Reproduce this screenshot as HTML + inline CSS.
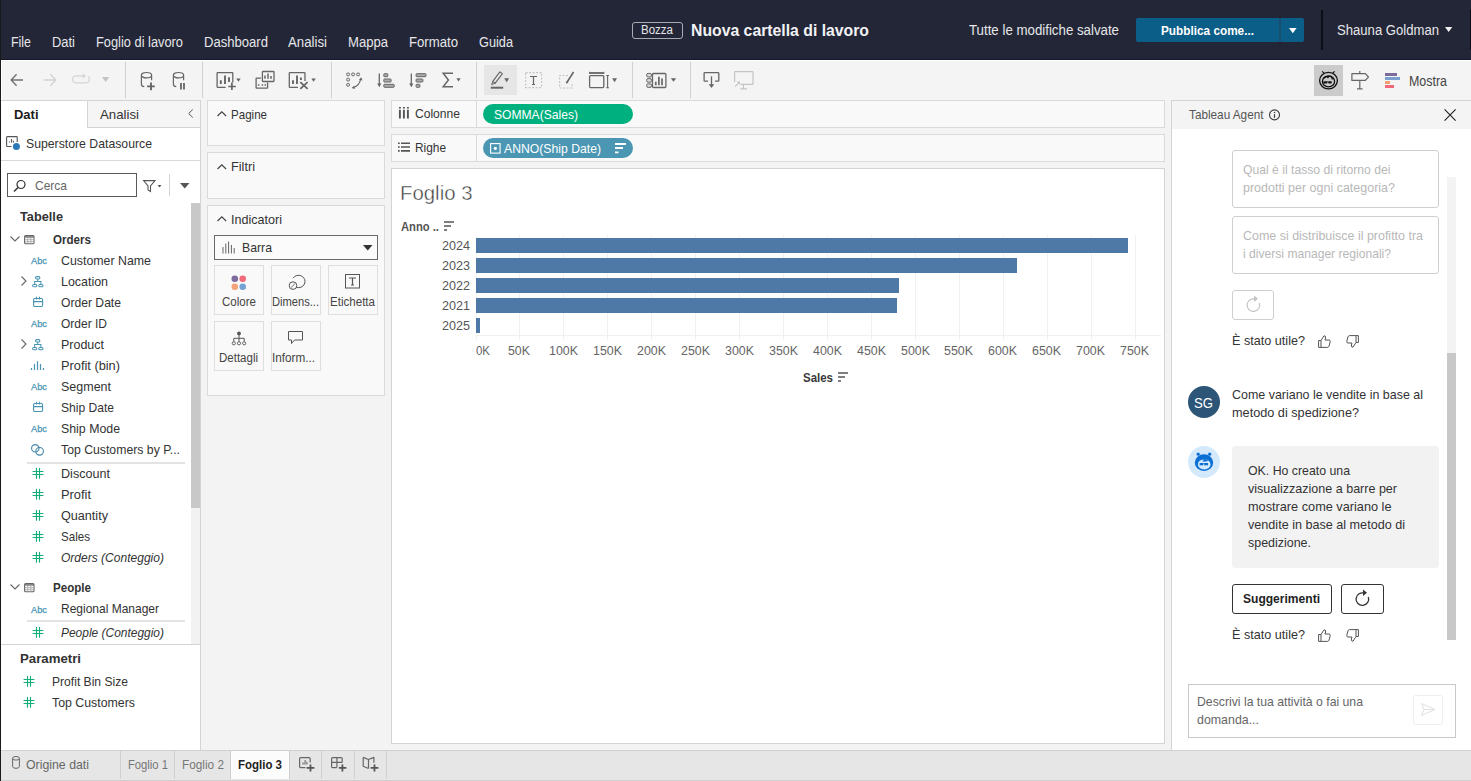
<!DOCTYPE html>
<html><head><meta charset="utf-8">
<style>
*{box-sizing:border-box;margin:0;padding:0}
html,body{width:1471px;height:781px;overflow:hidden;background:#f3f3f3;font-family:"Liberation Sans",sans-serif;color:#333}
.a{position:absolute}
.t{position:absolute;white-space:nowrap;line-height:1}
svg{position:absolute;overflow:visible}
</style></head><body>
<div class="a" style="left:0px;top:0px;width:1471px;height:59px;background:#232637;"></div>
<div class="a" style="left:0px;top:59px;width:1471px;height:1px;background:#161929;"></div>
<div class="a" style="left:0px;top:60px;width:1471px;height:1px;background:#ffffff;"></div>
<div class="a" style="left:0px;top:0px;width:1px;height:781px;background:#1a1a1a;"></div>
<div class="t" style="left: 11px; top: 35.15px; font-size: 14px; color: rgb(230, 230, 233); transform: scaleX(0.8864); transform-origin: 0px 0px;">File</div>
<div class="t" style="left: 52px; top: 35.15px; font-size: 14px; color: rgb(230, 230, 233); transform: scaleX(0.9235); transform-origin: 0px 0px;">Dati</div>
<div class="t" style="left: 96px; top: 35.15px; font-size: 14px; color: rgb(230, 230, 233); transform: scaleX(0.9164); transform-origin: 0px 0px;">Foglio di lavoro</div>
<div class="t" style="left: 204px; top: 35.15px; font-size: 14px; color: rgb(230, 230, 233); transform: scaleX(0.9343); transform-origin: 0px 0px;">Dashboard</div>
<div class="t" style="left: 288px; top: 35.15px; font-size: 14px; color: rgb(230, 230, 233); transform: scaleX(0.9455); transform-origin: 0px 0px;">Analisi</div>
<div class="t" style="left: 348px; top: 35.15px; font-size: 14px; color: rgb(230, 230, 233); transform: scaleX(0.9343); transform-origin: 0px 0px;">Mappa</div>
<div class="t" style="left: 409px; top: 35.15px; font-size: 14px; color: rgb(230, 230, 233); transform: scaleX(0.94); transform-origin: 0px 0px;">Formato</div>
<div class="t" style="left: 479px; top: 35.15px; font-size: 14px; color: rgb(230, 230, 233); transform: scaleX(0.9101); transform-origin: 0px 0px;">Guida</div>
<div class="a" style="left:632px;top:22px;width:51px;height:17px;border:1px solid #a9abb4;border-radius:3px;"></div>
<div class="t" style="left: 641px; top: 24.42px; font-size: 12.5px; color: rgb(230, 230, 233); transform: scaleX(0.9209); transform-origin: 0px 0px;">Bozza</div>
<div class="t" style="left: 691px; top: 21.61px; font-size: 17px; color: rgb(242, 242, 244); font-weight: bold; transform: scaleX(0.9281); transform-origin: 0px 0px;">Nuova cartella di lavoro</div>
<div class="t" style="left: 969px; top: 23.15px; font-size: 14px; color: rgb(230, 230, 233); transform: scaleX(0.948); transform-origin: 0px 0px;">Tutte le modifiche salvate</div>
<div class="a" style="left:1136px;top:18px;width:168px;height:24px;background:#0b5e88;border-radius:2px;"></div>
<div class="a" style="left:1279px;top:18px;width:2px;height:24px;background:#174f6f;"></div>
<div class="t" style="left: 1161px; top: 23.99px; font-size: 13px; color: rgb(255, 255, 255); font-weight: bold; transform: scaleX(0.9065); transform-origin: 0px 0px;">Pubblica come...</div>
<svg style="left:1288.5px;top:27.8px;" width="8" height="6" viewBox="0 0 8 6"><path d="M0 0H7.6L3.8 5.2Z" fill="#fff"></path></svg>
<div class="a" style="left:1321px;top:10px;width:2px;height:40px;background:#0d0e15;"></div>
<div class="a" style="left:1470px;top:10px;width:1px;height:40px;background:#0d0e15;"></div>
<div class="t" style="left: 1337px; top: 23.15px; font-size: 14px; color: rgb(230, 230, 233); transform: scaleX(0.936); transform-origin: 0px 0px;">Shauna Goldman</div>
<svg style="left:1444.8px;top:26.9px;" width="8" height="6" viewBox="0 0 8 6"><path d="M0 0H7.3L3.65 5Z" fill="#f0f0f2"></path></svg>
<div class="a" style="left:0px;top:61px;width:1471px;height:40px;background:#f4f4f4;"></div>
<div class="a" style="left:1px;top:61px;width:1px;height:39px;background:#fff;"></div>
<div class="a" style="left:0px;top:59px;width:1px;height:42px;background:#1a1a1a;"></div>
<div class="a" style="left:125px;top:62px;width:1px;height:36px;background:#d0d0d0;"></div>
<div class="a" style="left:202px;top:62px;width:1px;height:36px;background:#d0d0d0;"></div>
<div class="a" style="left:331px;top:62px;width:1px;height:36px;background:#d0d0d0;"></div>
<div class="a" style="left:476px;top:62px;width:1px;height:36px;background:#d0d0d0;"></div>
<div class="a" style="left:632px;top:62px;width:1px;height:36px;background:#d0d0d0;"></div>
<div class="a" style="left:690px;top:62px;width:1px;height:36px;background:#d0d0d0;"></div>
<svg style="left:10px;top:73px;" width="14" height="14" viewBox="0 0 14 14"><path d="M13 7H1.5M6.6 1.2L1.2 7L6.6 12.8" stroke="#727272" stroke-width="1.4" fill="none"></path></svg>
<svg style="left:43px;top:73px;" width="14" height="14" viewBox="0 0 14 14"><path d="M0.5 7H12.5M7.4 1.2L12.8 7L7.4 12.8" stroke="#d2d2d2" stroke-width="1.3" fill="none"></path></svg>
<svg style="left:72px;top:73px;" width="19" height="12" viewBox="0 0 19 12"><path d="M11.5 2.8H4.3Q0.6 2.8 0.6 6.3Q0.6 9.8 4.3 9.8H13.8Q17.4 9.8 17.4 6.3Q17.4 4.6 16.2 3.4" stroke="#d4d4d4" stroke-width="1.2" fill="none"></path><path d="M10.8 0.6L14 3.1L10.8 5.6Z" fill="#d4d4d4"></path></svg>
<svg style="left:101.5px;top:77px;" width="8" height="6" viewBox="0 0 8 6"><path d="M0 0H7.3L3.65 5Z" fill="#c4c4c4"></path></svg>
<svg style="left:141px;top:72px;" width="16" height="19" viewBox="0 0 16 19"><ellipse cx="5.5" cy="3.2" rx="5.1" ry="2.7" stroke="#666" stroke-width="1.2" fill="none"></ellipse><path d="M0.4 3.2V12.3Q0.4 14.5 3.3 14.7" stroke="#666" stroke-width="1.2" fill="none"></path><path d="M10.6 3.2V8.2" stroke="#666" stroke-width="1.2"></path><path d="M10 10.6V18.2M6.1 14.4H13.8" stroke="#666" stroke-width="1.9"></path></svg>
<svg style="left:173px;top:72px;" width="16" height="19" viewBox="0 0 16 19"><ellipse cx="5.5" cy="3.2" rx="5.1" ry="2.7" stroke="#666" stroke-width="1.2" fill="none"></ellipse><path d="M0.4 3.2V12.3Q0.4 14.5 3.3 14.7" stroke="#666" stroke-width="1.2" fill="none"></path><path d="M10.6 3.2V8.2" stroke="#666" stroke-width="1.2"></path><path d="M8 10.9V17.5M11 10.9V17.5" stroke="#666" stroke-width="1.8"></path></svg>
<svg style="left:216px;top:72px;" width="26" height="19" viewBox="0 0 26 19"><path d="M9.7 15.3H1.7Q1.1 15.3 1.1 14.7V1.2Q1.1 0.6 1.7 0.6H16.2Q16.8 0.6 16.8 1.2V10.6" stroke="#666" stroke-width="1.3" fill="none"></path><path d="M4.8 8.3V12M9 3.5V12M13 5.3V10" stroke="#666" stroke-width="1.9"></path><path d="M15.9 10.6V18M12.3 14.5H19.8" stroke="#666" stroke-width="1.7"></path><path d="M20.2 6.5H24.7L22.45 9.8Z" fill="#666"></path></svg>
<svg style="left:255px;top:71px;" width="20" height="18" viewBox="0 0 20 18"><rect x="7.4" y="0.5" width="11.6" height="10" rx="0.7" stroke="#666" stroke-width="1.3" fill="none"></rect><path d="M10 4.5V7.8M13 2.5V7.8M16 5V7.8" stroke="#666" stroke-width="1.5"></path><path d="M6 7.1H1.7Q1.1 7.1 1.1 7.7V16.5Q1.1 17.1 1.7 17.1H12Q12.6 17.1 12.6 16.5V11.6" stroke="#666" stroke-width="1.3" fill="none"></path><path d="M3.6 13.3V14.7M7.4 13.3V14.7M10.3 13.3V14.7" stroke="#666" stroke-width="1.5"></path></svg>
<svg style="left:288px;top:72px;" width="28" height="19" viewBox="0 0 28 19"><path d="M10 15.3H1.9Q1.3 15.3 1.3 14.7V1.2Q1.3 0.6 1.9 0.6H16.4Q17 0.6 17 1.2V9" stroke="#666" stroke-width="1.3" fill="none"></path><path d="M5 8.3V12M9 3.5V12M12.9 5.5V8" stroke="#666" stroke-width="1.9"></path><path d="M12.3 10.1L19.6 16.9M19.6 10.1L12.3 16.9" stroke="#666" stroke-width="1.7"></path><path d="M23.3 6.5H27.8L25.55 9.8Z" fill="#666"></path></svg>
<svg style="left:346px;top:72px;" width="18" height="18" viewBox="0 0 18 18"><g stroke="#666" stroke-width="1" fill="#e8e8e8"><rect x="0.6" y="1" width="3" height="2.8" rx="1.3"></rect><rect x="5.6" y="1" width="3" height="2.8" rx="1.3"></rect><rect x="10.6" y="1" width="3" height="2.8" rx="1.3"></rect><rect x="0.6" y="6.2" width="3" height="2.8" rx="1.3"></rect><rect x="0.6" y="11.4" width="3" height="2.8" rx="1.3"></rect></g><path d="M14.5 7.5Q13.5 13.5 7.5 15.5" stroke="#666" stroke-width="1.2" fill="none"></path><path d="M13 7.8L15.2 5.2L16.6 8.4Z M8.2 13.8L5.6 15.9L8.9 17Z" fill="#666"></path></svg>
<svg style="left:377px;top:72px;" width="18" height="18" viewBox="0 0 18 18"><path d="M2.3 1.4V12.5" stroke="#666" stroke-width="1.3"></path><path d="M0.2 11.6H4.4L2.3 15.2Z" fill="#666"></path><g stroke="#666" stroke-width="1" fill="#aaaaaa"><rect x="6.8" y="1.7" width="4" height="3" rx="0.7"></rect><rect x="6.8" y="7" width="7.3" height="3" rx="0.7"></rect><rect x="6.8" y="12.3" width="10.4" height="3" rx="0.7"></rect></g></svg>
<svg style="left:409px;top:72px;" width="18" height="18" viewBox="0 0 18 18"><path d="M2.3 1.4V12.5" stroke="#666" stroke-width="1.3"></path><path d="M0.2 11.6H4.4L2.3 15.2Z" fill="#666"></path><g stroke="#666" stroke-width="1" fill="#aaaaaa"><rect x="7.1" y="1.7" width="9.9" height="3" rx="0.7"></rect><rect x="7.1" y="7" width="6.8" height="3" rx="0.7"></rect><rect x="7.1" y="12.3" width="3.8" height="3" rx="0.7"></rect></g></svg>
<svg style="left:442px;top:72px;" width="20" height="17" viewBox="0 0 20 17"><path d="M11 1.3H1.2L6.4 8L1.2 14.8H11" stroke="#666" stroke-width="1.5" fill="none"></path><path d="M14.3 6.3H18.7L16.5 9.4Z" fill="#666"></path></svg>
<div class="a" style="left:484px;top:65px;width:33px;height:30px;background:#e6e6e6;"></div>
<svg style="left:490px;top:71px;" width="24" height="19" viewBox="0 0 24 19"><path d="M2.8 10.4L9.9 0.9L12.4 2.6L5.3 12.2Z" stroke="#666" stroke-width="1.1" fill="none" stroke-linejoin="round"></path><path d="M2.8 10.4L1.6 13.6L5.3 12.2" stroke="#666" stroke-width="1" fill="none"></path><rect x="0.8" y="15.7" width="12.4" height="2" fill="#666"></rect><path d="M14.2 7.3H19.1L16.65 11.2Z" fill="#666"></path></svg>
<svg style="left:525px;top:72px;" width="18" height="17" viewBox="0 0 18 17"><rect x="0.6" y="0.6" width="16" height="15" stroke="#c4c4c4" stroke-width="1.1" stroke-dasharray="2 1.5" fill="none"></rect><path d="M5 4.5H12M8.5 4.5V12.5M7 12.5H10" stroke="#666" stroke-width="1.2" fill="none"></path></svg>
<svg style="left:559px;top:71px;" width="16" height="18" viewBox="0 0 16 18"><path d="M9 4.5H0.6V17H13V12" stroke="#c4c4c4" stroke-width="1.1" stroke-dasharray="2 1.5" fill="none"></path><path d="M14.5 1L8.5 10.5" stroke="#666" stroke-width="1.6"></path><path d="M7 11.5L9 11" stroke="#666" stroke-width="2"></path></svg>
<svg style="left:589px;top:71px;" width="29" height="19" viewBox="0 0 29 19"><path d="M0.6 2H14.8" stroke="#666" stroke-width="1.8"></path><path d="M0.6 0.8V3M14.8 0.8V3" stroke="#666" stroke-width="1"></path><rect x="0.6" y="4.6" width="14.2" height="12" rx="1" stroke="#666" stroke-width="1.3" fill="none"></rect><path d="M18.6 4.5V16.7M17.2 4.5H20M17.2 16.7H20" stroke="#666" stroke-width="1.1"></path><path d="M23.2 7.3H28L25.6 11.2Z" fill="#666"></path></svg>
<svg style="left:645px;top:72px;" width="32" height="17" viewBox="0 0 32 17"><g stroke="#666" stroke-width="1" fill="#d8d8d8"><rect x="1.6" y="1.4" width="5" height="3.6" rx="1.6"></rect><rect x="1.6" y="6.6" width="5" height="3.6" rx="1.6"></rect><rect x="1.6" y="11.8" width="5" height="3.6" rx="1.6"></rect></g><rect x="7.5" y="1.5" width="13.4" height="14" rx="1" stroke="#666" stroke-width="1.3" fill="none"></rect><path d="M10.8 13.2V9.7M13.9 13.2V4.8M17 13.2V6.6" stroke="#666" stroke-width="1.7"></path><path d="M25.8 6.2H31.2L28.5 9.7Z" fill="#666"></path></svg>
<svg style="left:703px;top:72px;" width="18" height="17" viewBox="0 0 18 17"><path d="M5 9.2H1.9Q1.1 9.2 1.1 8.4V1.4Q1.1 0.6 1.9 0.6H15Q15.8 0.6 15.8 1.4V8.4Q15.8 9.2 15 9.2H12" stroke="#666" stroke-width="1.3" fill="none"></path><path d="M8.5 4.3V13" stroke="#666" stroke-width="1.3"></path><path d="M5.7 12.2H11.3L8.5 16Z" fill="#666"></path></svg>
<svg style="left:734px;top:71px;" width="20" height="19" viewBox="0 0 20 19"><path d="M0.6 11V1.2Q0.6 0.6 1.2 0.6H18.4Q19 0.6 19 1.2V12.8Q19 13.4 18.4 13.4H6.5" stroke="#c4c4c4" stroke-width="1.2" fill="none"></path><path d="M9.4 13.4V17.8M6.3 17.8H13" stroke="#c4c4c4" stroke-width="1.2"></path><path d="M1 15.6L5.2 11.4" stroke="#c4c4c4" stroke-width="1.2"></path><path d="M2.8 10.6H6V13.8Z" fill="#c4c4c4"></path></svg>
<div class="a" style="left:1314px;top:65px;width:29px;height:31px;background:#cbcbcb;"></div>
<svg style="left:1319px;top:71px;" width="20" height="19" viewBox="0 0 20 19"><ellipse cx="9.5" cy="9.6" rx="8.9" ry="8.3" stroke="#111" stroke-width="1.3" fill="none"></ellipse><path d="M3.2 0.3L5 2.2M15.6 0.3L13.8 2.2" stroke="#111" stroke-width="1.2"></path><ellipse cx="9.5" cy="10.4" rx="6.1" ry="5.4" stroke="#111" stroke-width="1.3" fill="none"></ellipse><path d="M4.5 7.5Q7 4.5 9 6.5Q10 4.5 12 5.5Q13 6.5 13.5 8.5" stroke="#111" stroke-width="1.3" fill="none"></path><rect x="4.3" y="10.2" width="4" height="2.3" rx="0.8" fill="#111"></rect><rect x="9.2" y="10.2" width="3.6" height="2.3" rx="0.8" fill="#111"></rect><path d="M8 10.8H9.5" stroke="#111" stroke-width="0.8"></path></svg>
<svg style="left:1351px;top:71px;" width="19" height="19" viewBox="0 0 19 19"><path d="M8.8 0V2.2M8.8 9.5V17.6M6 17.8H11.6" stroke="#666" stroke-width="1.2"></path><path d="M0.9 2.6H14.4L17.4 6L14.4 9.4H0.9Z" stroke="#666" stroke-width="1.2" fill="none" stroke-linejoin="round"></path></svg>
<div class="a" style="left:1385px;top:73px;width:11.5px;height:2.8px;background:#7b6c9c;"></div>
<div class="a" style="left:1385px;top:77.3px;width:14.7px;height:2.5px;background:#7ba0cf;"></div>
<div class="a" style="left:1385px;top:81.2px;width:5.3px;height:2.5px;background:#f0a070;"></div>
<div class="a" style="left:1385px;top:85.1px;width:8.5px;height:2.8px;background:#f0687a;"></div>
<div class="t" style="left: 1409px; top: 74.15px; font-size: 14px; color: rgb(68, 68, 68); transform: scaleX(0.8879); transform-origin: 0px 0px;">Mostra</div>
<div class="a" style="left:1px;top:100px;width:200px;height:650px;background:#fff;border:1px solid #d4d4d4;border-left:none;border-bottom:none;"></div>
<div class="a" style="left:87px;top:101px;width:113px;height:26px;background:#f5f5f5;"></div>
<div class="a" style="left:87px;top:101px;width:1px;height:27px;background:#d4d4d4;"></div>
<div class="a" style="left:87px;top:127px;width:113px;height:1px;background:#d4d4d4;"></div>
<div class="t" style="left: 13.5px; top: 107.57px; font-size: 13.5px; color: rgb(26, 26, 26); font-weight: bold; transform: scaleX(0.9602); transform-origin: 0px 0px;">Dati</div>
<div class="t" style="left: 100px; top: 107.57px; font-size: 13.5px; color: rgb(51, 51, 51); transform: scaleX(0.9804); transform-origin: 0px 0px;">Analisi</div>
<svg style="left:187.5px;top:108.5px;" width="6" height="10" viewBox="0 0 6 10"><path d="M4.8 0.5L0.7 4.5L4.8 8.5" stroke="#555" stroke-width="1" fill="none"></path></svg>
<svg style="left:6px;top:136px;" width="15" height="15" viewBox="0 0 15 15"><path d="M5.5 10.5H1.3Q0.6 10.5 0.6 9.8V1.3Q0.6 0.6 1.3 0.6H10.5Q11.2 0.6 11.2 1.3V5.9" stroke="#555" stroke-width="1.1" fill="none"></path><path d="M3.4 5.6V6.6M5.5 3.1V6.6M7.4 4.8V6.6" stroke="#555" stroke-width="1.1"></path><circle cx="10.4" cy="10.4" r="3.5" fill="#2c79b8"></circle></svg>
<div class="t" style="left: 26px; top: 136.99px; font-size: 13px; color: rgb(51, 51, 51); transform: scaleX(0.9425); transform-origin: 0px 0px;">Superstore Datasource</div>
<div class="a" style="left:1px;top:160px;width:199px;height:1px;background:#d9d9d9;"></div>
<div class="a" style="left:7px;top:173px;width:130px;height:24px;background:#fff;border:1px solid #5a5a5a;"></div>
<svg style="left:13px;top:180px;" width="13" height="12" viewBox="0 0 13 12"><circle cx="8" cy="4.5" r="4" stroke="#333" stroke-width="1.2" fill="none"></circle><path d="M5 7.5L1 11.5" stroke="#333" stroke-width="1.4"></path></svg>
<div class="t" style="left: 35px; top: 178.57px; font-size: 13.5px; color: rgb(102, 102, 102); transform: scaleX(0.8885); transform-origin: 0px 0px;">Cerca</div>
<svg style="left:143px;top:180px;" width="19" height="12" viewBox="0 0 19 12"><path d="M0.6 0.6H12L7.5 6V11.5L5 10V6Z" stroke="#555" stroke-width="1.1" fill="none"></path><path d="M14.5 5H18.5L16.5 7.5Z" fill="#555"></path></svg>
<div class="a" style="left:169px;top:174px;width:1px;height:22px;background:#d4d4d4;"></div>
<svg style="left:180px;top:183px;" width="10" height="6" viewBox="0 0 10 6"><path d="M0 0H9.5L4.75 5.5Z" fill="#555"></path></svg>
<div class="a" style="left:191px;top:203px;width:9px;height:441px;background:#f2f2f2;"></div>
<div class="a" style="left:191px;top:203px;width:9px;height:305px;background:#c8c8c8;"></div>
<div class="t" style="left: 19.5px; top: 209.57px; font-size: 13.5px; color: rgb(51, 51, 51); font-weight: bold; transform: scaleX(0.9444); transform-origin: 0px 0px;">Tabelle</div>
<svg style="left:10px;top:236px;" width="10" height="6" viewBox="0 0 10 6"><path d="M0.5 0.5L5 5L9.5 0.5" stroke="#666" stroke-width="1.1" fill="none"></path></svg>
<svg style="left:24px;top:235px;" width="11" height="10" viewBox="0 0 11 10"><rect x="0.6" y="0.6" width="9.4" height="8.2" rx="1" stroke="#666" stroke-width="1.1" fill="none"></rect><path d="M0.6 2.6H10M1 4.7H9.6M1 6.7H9.6M3.8 2.6V8.6M6.8 2.6V8.6" stroke="#999" stroke-width="0.7"></path><path d="M0.6 1.8H10" stroke="#666" stroke-width="1"></path></svg>
<div class="t" style="left: 52.5px; top: 232.99px; font-size: 13px; color: rgb(51, 51, 51); font-weight: bold; transform: scaleX(0.8912); transform-origin: 0px 0px;">Orders</div>
<div class="t" style="left: 60.5px; top: 253.99px; font-size: 13px; color: rgb(51, 51, 51); transform: scaleX(0.951); transform-origin: 0px 0px;">Customer Name</div>
<div class="t" style="left: 31px; top: 255.96px; font-size: 9.5px; color: rgb(71, 149, 179); -webkit-text-stroke: 0.25px rgb(71, 149, 179); transform: scaleX(0.9771); transform-origin: 0px 0px;">Abc</div>
<div class="t" style="left: 60.5px; top: 274.99px; font-size: 13px; color: rgb(51, 51, 51); transform: scaleX(0.9561); transform-origin: 0px 0px;">Location</div>
<svg style="left:32px;top:276px;" width="12" height="12" viewBox="0 0 12 12"><g stroke="#4795b3" stroke-width="1.05" fill="none"><rect x="3.5" y="0.6" width="4.4" height="2.3" rx="1.1"></rect><rect x="0.6" y="8.5" width="4.2" height="2.3" rx="1.1"></rect><rect x="6.8" y="8.5" width="4.2" height="2.3" rx="1.1"></rect><path d="M5.7 2.9V5.4M2.7 8.5V5.4H8.9V8.5"></path></g></svg>
<svg style="left:21px;top:275.5px;" width="6" height="10" viewBox="0 0 6 10"><path d="M0.5 0.5L5 5L0.5 9.5" stroke="#666" stroke-width="1.1" fill="none"></path></svg>
<div class="t" style="left: 60.5px; top: 295.99px; font-size: 13px; color: rgb(51, 51, 51); transform: scaleX(0.9329); transform-origin: 0px 0px;">Order Date</div>
<svg style="left:33px;top:296px;" width="11" height="12" viewBox="0 0 11 12"><rect x="0.6" y="2.5" width="9" height="8" rx="1.2" stroke="#4795b3" stroke-width="1.1" fill="none"></rect><path d="M0.6 5.6H9.6M3.5 0.7V3.4M6.5 0.7V3.4" stroke="#4795b3" stroke-width="1.1" fill="none"></path></svg>
<div class="t" style="left: 60.5px; top: 316.99px; font-size: 13px; color: rgb(51, 51, 51); transform: scaleX(0.9229); transform-origin: 0px 0px;">Order ID</div>
<div class="t" style="left: 31px; top: 318.96px; font-size: 9.5px; color: rgb(71, 149, 179); -webkit-text-stroke: 0.25px rgb(71, 149, 179); transform: scaleX(0.9771); transform-origin: 0px 0px;">Abc</div>
<div class="t" style="left: 60.5px; top: 337.99px; font-size: 13px; color: rgb(51, 51, 51); transform: scaleX(0.9596); transform-origin: 0px 0px;">Product</div>
<svg style="left:32px;top:339px;" width="12" height="12" viewBox="0 0 12 12"><g stroke="#4795b3" stroke-width="1.05" fill="none"><rect x="3.5" y="0.6" width="4.4" height="2.3" rx="1.1"></rect><rect x="0.6" y="8.5" width="4.2" height="2.3" rx="1.1"></rect><rect x="6.8" y="8.5" width="4.2" height="2.3" rx="1.1"></rect><path d="M5.7 2.9V5.4M2.7 8.5V5.4H8.9V8.5"></path></g></svg>
<svg style="left:21px;top:338.5px;" width="6" height="10" viewBox="0 0 6 10"><path d="M0.5 0.5L5 5L0.5 9.5" stroke="#666" stroke-width="1.1" fill="none"></path></svg>
<div class="t" style="left: 60.5px; top: 358.99px; font-size: 13px; color: rgb(51, 51, 51); transform: scaleX(0.9838); transform-origin: 0px 0px;">Profit (bin)</div>
<svg style="left:31px;top:361px;" width="14" height="10" viewBox="0 0 14 10"><path d="M0.5 7.1V9M3.5 3.1V9M6.5 0.2V9M9.5 3.1V9M12.5 7.1V9" stroke="#4795b3" stroke-width="1.2"></path></svg>
<div class="t" style="left: 60.5px; top: 379.99px; font-size: 13px; color: rgb(51, 51, 51); transform: scaleX(0.9607); transform-origin: 0px 0px;">Segment</div>
<div class="t" style="left: 31px; top: 381.96px; font-size: 9.5px; color: rgb(71, 149, 179); -webkit-text-stroke: 0.25px rgb(71, 149, 179); transform: scaleX(0.9771); transform-origin: 0px 0px;">Abc</div>
<div class="t" style="left: 60.5px; top: 400.99px; font-size: 13px; color: rgb(51, 51, 51); transform: scaleX(0.9283); transform-origin: 0px 0px;">Ship Date</div>
<svg style="left:33px;top:401px;" width="11" height="12" viewBox="0 0 11 12"><rect x="0.6" y="2.5" width="9" height="8" rx="1.2" stroke="#4795b3" stroke-width="1.1" fill="none"></rect><path d="M0.6 5.6H9.6M3.5 0.7V3.4M6.5 0.7V3.4" stroke="#4795b3" stroke-width="1.1" fill="none"></path></svg>
<div class="t" style="left: 60.5px; top: 421.99px; font-size: 13px; color: rgb(51, 51, 51); transform: scaleX(0.9492); transform-origin: 0px 0px;">Ship Mode</div>
<div class="t" style="left: 31px; top: 423.96px; font-size: 9.5px; color: rgb(71, 149, 179); -webkit-text-stroke: 0.25px rgb(71, 149, 179); transform: scaleX(0.9771); transform-origin: 0px 0px;">Abc</div>
<div class="t" style="left: 60.5px; top: 442.99px; font-size: 13px; color: rgb(51, 51, 51); transform: scaleX(0.9428); transform-origin: 0px 0px;">Top Customers by P...</div>
<svg style="left:31px;top:443px;" width="14" height="14" viewBox="0 0 14 14"><circle cx="4.3" cy="5.3" r="3.7" stroke="#3f86a6" stroke-width="1.1" fill="none"></circle><circle cx="8.6" cy="8.3" r="3.8" stroke="#3f86a6" stroke-width="1.1" fill="none"></circle></svg>
<div class="a" style="left:27px;top:462px;width:158px;height:2px;background:#e3e3e3;"></div>
<div class="t" style="left: 60.5px; top: 466.99px; font-size: 13px; color: rgb(51, 51, 51); transform: scaleX(0.9688); transform-origin: 0px 0px;">Discount</div>
<svg style="left:32px;top:468px;" width="12" height="11" viewBox="0 0 12 11"><path d="M4.5 0.3V10.2M7.5 0.3V10.2M1 3.5H11M1 6.5H11" stroke="#12ad7b" stroke-width="1.15" stroke-linecap="round"></path></svg>
<div class="t" style="left: 60.5px; top: 487.99px; font-size: 13px; color: rgb(51, 51, 51); transform: scaleX(0.9887); transform-origin: 0px 0px;">Profit</div>
<svg style="left:32px;top:489px;" width="12" height="11" viewBox="0 0 12 11"><path d="M4.5 0.3V10.2M7.5 0.3V10.2M1 3.5H11M1 6.5H11" stroke="#12ad7b" stroke-width="1.15" stroke-linecap="round"></path></svg>
<div class="t" style="left: 60.5px; top: 508.99px; font-size: 13px; color: rgb(51, 51, 51); transform: scaleX(0.9706); transform-origin: 0px 0px;">Quantity</div>
<svg style="left:32px;top:510px;" width="12" height="11" viewBox="0 0 12 11"><path d="M4.5 0.3V10.2M7.5 0.3V10.2M1 3.5H11M1 6.5H11" stroke="#12ad7b" stroke-width="1.15" stroke-linecap="round"></path></svg>
<div class="t" style="left: 60.5px; top: 529.99px; font-size: 13px; color: rgb(51, 51, 51); transform: scaleX(0.8915); transform-origin: 0px 0px;">Sales</div>
<svg style="left:32px;top:531px;" width="12" height="11" viewBox="0 0 12 11"><path d="M4.5 0.3V10.2M7.5 0.3V10.2M1 3.5H11M1 6.5H11" stroke="#12ad7b" stroke-width="1.15" stroke-linecap="round"></path></svg>
<div class="t" style="left: 60.5px; top: 550.99px; font-size: 13px; color: rgb(51, 51, 51); font-style: italic; transform: scaleX(0.9256); transform-origin: 0px 0px;">Orders (Conteggio)</div>
<svg style="left:32px;top:552px;" width="12" height="11" viewBox="0 0 12 11"><path d="M4.5 0.3V10.2M7.5 0.3V10.2M1 3.5H11M1 6.5H11" stroke="#12ad7b" stroke-width="1.15" stroke-linecap="round"></path></svg>
<svg style="left:10px;top:584px;" width="10" height="6" viewBox="0 0 10 6"><path d="M0.5 0.5L5 5L9.5 0.5" stroke="#666" stroke-width="1.1" fill="none"></path></svg>
<svg style="left:24px;top:583px;" width="11" height="10" viewBox="0 0 11 10"><rect x="0.6" y="0.6" width="9.4" height="8.2" rx="1" stroke="#666" stroke-width="1.1" fill="none"></rect><path d="M0.6 2.6H10M1 4.7H9.6M1 6.7H9.6M3.8 2.6V8.6M6.8 2.6V8.6" stroke="#999" stroke-width="0.7"></path><path d="M0.6 1.8H10" stroke="#666" stroke-width="1"></path></svg>
<div class="t" style="left: 52.5px; top: 580.99px; font-size: 13px; color: rgb(51, 51, 51); font-weight: bold; transform: scaleX(0.8915); transform-origin: 0px 0px;">People</div>
<div class="t" style="left: 31px; top: 604.96px; font-size: 9.5px; color: rgb(71, 149, 179); -webkit-text-stroke: 0.25px rgb(71, 149, 179); transform: scaleX(0.9771); transform-origin: 0px 0px;">Abc</div>
<div class="t" style="left: 60.5px; top: 601.99px; font-size: 13px; color: rgb(51, 51, 51); transform: scaleX(0.9225); transform-origin: 0px 0px;">Regional Manager</div>
<div class="a" style="left:27px;top:620px;width:158px;height:2px;background:#e3e3e3;"></div>
<svg style="left:32px;top:627px;" width="12" height="11" viewBox="0 0 12 11"><path d="M4.5 0.3V10.2M7.5 0.3V10.2M1 3.5H11M1 6.5H11" stroke="#12ad7b" stroke-width="1.15" stroke-linecap="round"></path></svg>
<div class="t" style="left: 60.5px; top: 625.99px; font-size: 13px; color: rgb(51, 51, 51); font-style: italic; transform: scaleX(0.9194); transform-origin: 0px 0px;">People (Conteggio)</div>
<div class="a" style="left:1px;top:644px;width:199px;height:1px;background:#d4d4d4;"></div>
<div class="t" style="left: 19.5px; top: 651.57px; font-size: 13.5px; color: rgb(51, 51, 51); font-weight: bold; transform: scaleX(0.9792); transform-origin: 0px 0px;">Parametri</div>
<svg style="left:23px;top:676px;" width="12" height="11" viewBox="0 0 12 11"><path d="M4.5 0.3V10.2M7.5 0.3V10.2M1 3.5H11M1 6.5H11" stroke="#12ad7b" stroke-width="1.15" stroke-linecap="round"></path></svg>
<div class="t" style="left: 52px; top: 674.99px; font-size: 13px; color: rgb(51, 51, 51); transform: scaleX(0.9307); transform-origin: 0px 0px;">Profit Bin Size</div>
<svg style="left:23px;top:697px;" width="12" height="11" viewBox="0 0 12 11"><path d="M4.5 0.3V10.2M7.5 0.3V10.2M1 3.5H11M1 6.5H11" stroke="#12ad7b" stroke-width="1.15" stroke-linecap="round"></path></svg>
<div class="t" style="left: 52px; top: 695.99px; font-size: 13px; color: rgb(51, 51, 51); transform: scaleX(0.9494); transform-origin: 0px 0px;">Top Customers</div>
<div class="a" style="left:207px;top:100px;width:178px;height:46px;background:#f9f9f9;border:1px solid #dadada;"></div>
<svg style="left:216.5px;top:111px;" width="10" height="6" viewBox="0 0 10 6"><path d="M0.5 5L4.8 0.8L9.1 5" stroke="#444" stroke-width="1.2" fill="none"></path></svg>
<div class="t" style="left: 230.7px; top: 107.57px; font-size: 13.5px; color: rgb(51, 51, 51); transform: scaleX(0.8562); transform-origin: 0px 0px;">Pagine</div>
<div class="a" style="left:207px;top:152px;width:178px;height:47px;background:#f9f9f9;border:1px solid #dadada;"></div>
<svg style="left:216.5px;top:164px;" width="10" height="6" viewBox="0 0 10 6"><path d="M0.5 5L4.8 0.8L9.1 5" stroke="#444" stroke-width="1.2" fill="none"></path></svg>
<div class="t" style="left: 230.7px; top: 159.57px; font-size: 13.5px; color: rgb(51, 51, 51); transform: scaleX(0.9412); transform-origin: 0px 0px;">Filtri</div>
<div class="a" style="left:207px;top:205px;width:178px;height:191px;background:#f9f9f9;border:1px solid #dadada;"></div>
<svg style="left:216.5px;top:216px;" width="10" height="6" viewBox="0 0 10 6"><path d="M0.5 5L4.8 0.8L9.1 5" stroke="#444" stroke-width="1.2" fill="none"></path></svg>
<div class="t" style="left: 230.7px; top: 212.57px; font-size: 13.5px; color: rgb(51, 51, 51); transform: scaleX(0.931); transform-origin: 0px 0px;">Indicatori</div>
<div class="a" style="left:214px;top:235px;width:164px;height:25px;background:#fbfbfb;border:1px solid #6a6a6a;"></div>
<svg style="left:222px;top:241px;" width="14" height="13" viewBox="0 0 14 13"><path d="M1 12.5V6M3.8 12.5V2.5M6.6 12.5V0.5M9.4 12.5V4M12.2 12.5V7" stroke="#555" stroke-width="0.9"></path></svg>
<div class="t" style="left: 241.5px; top: 240.57px; font-size: 13.5px; color: rgb(51, 51, 51); transform: scaleX(0.9087); transform-origin: 0px 0px;">Barra</div>
<svg style="left:363px;top:245px;" width="10" height="6" viewBox="0 0 10 6"><path d="M0 0H9.5L4.75 5.5Z" fill="#333"></path></svg>
<div class="a" style="left:214px;top:265px;width:50px;height:50px;background:#f9f9f9;border:1px solid #dedede;"></div>
<div class="a" style="left:271px;top:265px;width:50px;height:50px;background:#f9f9f9;border:1px solid #dedede;"></div>
<div class="a" style="left:328px;top:265px;width:50px;height:50px;background:#f9f9f9;border:1px solid #dedede;"></div>
<div class="a" style="left:214px;top:321px;width:50px;height:50px;background:#f9f9f9;border:1px solid #dedede;"></div>
<div class="a" style="left:271px;top:321px;width:50px;height:50px;background:#f9f9f9;border:1px solid #dedede;"></div>
<svg style="left:231px;top:275px;" width="16" height="16" viewBox="0 0 16 16"><circle cx="3.8" cy="3.8" r="3.3" fill="#7d6a9f"></circle><circle cx="11.7" cy="3.8" r="3.3" fill="#f06a7a"></circle><circle cx="3.8" cy="11.7" r="3.3" fill="#f2a37a"></circle><circle cx="11.7" cy="11.7" r="3.3" fill="#74a2d2"></circle></svg>
<div class="t" style="left: 222px; top: 296.42px; font-size: 12.5px; color: rgb(68, 68, 68); transform: scaleX(0.9232); transform-origin: 0px 0px;">Colore</div>
<svg style="left:288px;top:274px;" width="16" height="15" viewBox="0 0 16 15"><path d="M5 4.2A6.5 6.2 0 1 1 8.3 13.3" stroke="#555" stroke-width="1" fill="none"></path><circle cx="5" cy="11.6" r="3.8" stroke="#555" stroke-width="1" fill="none"></circle><path d="M3.2 13.4L6.8 9.8" stroke="#555" stroke-width="0.9"></path></svg>
<div class="t" style="left: 272px; top: 296.42px; font-size: 12.5px; color: rgb(68, 68, 68); transform: scaleX(0.8902); transform-origin: 0px 0px;">Dimens...</div>
<svg style="left:345px;top:274px;" width="15" height="15" viewBox="0 0 15 15"><rect x="0.5" y="0.5" width="14" height="13.5" stroke="#555" fill="none"></rect><path d="M4 4H11M7.5 4V11M6 11H9" stroke="#555" stroke-width="1.2"></path></svg>
<div class="t" style="left: 330px; top: 296.42px; font-size: 12.5px; color: rgb(68, 68, 68); transform: scaleX(0.9252); transform-origin: 0px 0px;">Etichetta</div>
<svg style="left:231px;top:331px;" width="16" height="15" viewBox="0 0 16 15"><circle cx="8" cy="2.4" r="1.9" fill="#555"></circle><path d="M8 4V10.6M2.8 10.6V7.3H13.2V10.6" stroke="#555" fill="none"></path><circle cx="2.8" cy="12.3" r="1.6" stroke="#555" stroke-width="0.9" fill="#f9f9f9"></circle><circle cx="8" cy="12.3" r="1.6" stroke="#555" stroke-width="0.9" fill="#f9f9f9"></circle><circle cx="13.2" cy="12.3" r="1.6" stroke="#555" stroke-width="0.9" fill="#f9f9f9"></circle></svg>
<div class="t" style="left: 219px; top: 352.42px; font-size: 12.5px; color: rgb(68, 68, 68); transform: scaleX(0.92); transform-origin: 0px 0px;">Dettagli</div>
<svg style="left:288px;top:331px;" width="16" height="14" viewBox="0 0 16 14"><path d="M0.5 0.5H14.5V9H6.5L3.5 12.5V9H0.5Z" stroke="#555" fill="none"></path></svg>
<div class="t" style="left: 272px; top: 352.42px; font-size: 12.5px; color: rgb(68, 68, 68); transform: scaleX(0.938); transform-origin: 0px 0px;">Inform...</div>
<div class="a" style="left:391px;top:100px;width:774px;height:28px;background:#f9f9f9;border:1px solid #dadada;"></div>
<div class="a" style="left:476px;top:100px;width:1px;height:28px;background:#d9d9d9;"></div>
<div class="a" style="left:391px;top:134px;width:774px;height:28px;background:#f9f9f9;border:1px solid #dadada;"></div>
<div class="a" style="left:476px;top:134px;width:1px;height:28px;background:#d9d9d9;"></div>
<svg style="left:398px;top:107px;" width="12" height="12" viewBox="0 0 12 12"><path d="M1.9 0V1.5M5.9 0V1.5M9.9 0V1.5" stroke="#555" stroke-width="1.9"></path><path d="M1.9 2.7V11.5M5.9 2.7V11.5M9.9 2.7V11.5" stroke="#555" stroke-width="1.9"></path></svg>
<div class="t" style="left: 414.8px; top: 106.57px; font-size: 13.5px; color: rgb(51, 51, 51); transform: scaleX(0.8947); transform-origin: 0px 0px;">Colonne</div>
<svg style="left:398px;top:142px;" width="13" height="10" viewBox="0 0 13 10"><path d="M0 1.2H1.7M0 5H1.7M0 8.9H1.7M3 1.2H12M3 5H12M3 8.9H12" stroke="#555" stroke-width="1.6"></path></svg>
<div class="t" style="left: 414.8px; top: 140.57px; font-size: 13.5px; color: rgb(51, 51, 51); transform: scaleX(0.8787); transform-origin: 0px 0px;">Righe</div>
<div class="a" style="left:483px;top:104px;width:150px;height:20px;background:#00b07f;border-radius:10px;"></div>
<div class="t" style="left: 494px; top: 107.57px; font-size: 13.5px; color: rgb(255, 255, 255); transform: scaleX(0.8959); transform-origin: 0px 0px;">SOMMA(Sales)</div>
<div class="a" style="left:483px;top:138px;width:150px;height:20px;background:#4b96b3;border-radius:10px;"></div>
<svg style="left:490px;top:143px;" width="11" height="11" viewBox="0 0 11 11"><rect x="0.6" y="0.6" width="9.5" height="9.5" stroke="#fff" stroke-width="1.1" fill="none"></rect><circle cx="5.35" cy="5.35" r="1.6" fill="#fff"></circle></svg>
<div class="t" style="left: 504px; top: 141.57px; font-size: 13.5px; color: rgb(255, 255, 255); transform: scaleX(0.904); transform-origin: 0px 0px;">ANNO(Ship Date)</div>
<svg style="left:615px;top:143px;" width="12" height="11" viewBox="0 0 12 11"><path d="M0 1H11M0 5H8M0 9.3H3.5" stroke="#fff" stroke-width="1.8"></path></svg>
<div class="a" style="left:391px;top:168px;width:774px;height:576px;background:#fff;border:1px solid #d4d4d4;"></div>
<div class="t" style="left: 400px; top: 182.22px; font-size: 21px; color: rgb(58, 58, 58); -webkit-text-stroke: 0.45px rgb(255, 255, 255); transform: scaleX(0.9703); transform-origin: 0px 0px;">Foglio 3</div>
<div class="t" style="left: 401px; top: 220.84px; font-size: 12px; color: rgb(85, 85, 85); font-weight: bold; transform: scaleX(0.9343); transform-origin: 0px 0px;">Anno ..</div>
<svg style="left:444px;top:221px;" width="11" height="10" viewBox="0 0 11 10"><path d="M0 1H10M0 5H7M0 9H3" stroke="#555" stroke-width="1.6"></path></svg>
<div class="a" style="left:476px;top:235px;width:1px;height:105px;background:#f0f0f0;"></div>
<div class="a" style="left:519px;top:235px;width:1px;height:105px;background:#f0f0f0;"></div>
<div class="a" style="left:563px;top:235px;width:1px;height:105px;background:#f0f0f0;"></div>
<div class="a" style="left:607px;top:235px;width:1px;height:105px;background:#f0f0f0;"></div>
<div class="a" style="left:651px;top:235px;width:1px;height:105px;background:#f0f0f0;"></div>
<div class="a" style="left:695px;top:235px;width:1px;height:105px;background:#f0f0f0;"></div>
<div class="a" style="left:739px;top:235px;width:1px;height:105px;background:#f0f0f0;"></div>
<div class="a" style="left:783px;top:235px;width:1px;height:105px;background:#f0f0f0;"></div>
<div class="a" style="left:827px;top:235px;width:1px;height:105px;background:#f0f0f0;"></div>
<div class="a" style="left:871px;top:235px;width:1px;height:105px;background:#f0f0f0;"></div>
<div class="a" style="left:915px;top:235px;width:1px;height:105px;background:#f0f0f0;"></div>
<div class="a" style="left:959px;top:235px;width:1px;height:105px;background:#f0f0f0;"></div>
<div class="a" style="left:1003px;top:235px;width:1px;height:105px;background:#f0f0f0;"></div>
<div class="a" style="left:1047px;top:235px;width:1px;height:105px;background:#f0f0f0;"></div>
<div class="a" style="left:1091px;top:235px;width:1px;height:105px;background:#f0f0f0;"></div>
<div class="a" style="left:1135px;top:235px;width:1px;height:105px;background:#f0f0f0;"></div>
<div class="a" style="left:476px;top:335px;width:685px;height:1px;background:#f0f0f0;"></div>
<div class="a" style="left:476px;top:238px;width:652px;height:15px;background:#4e79a7;"></div>
<div class="t" style="left: 441.5px; top: 240.42px; font-size: 12.5px; color: rgb(85, 85, 85); transform: scaleX(1.0067); transform-origin: 0px 0px;">2024</div>
<div class="a" style="left:476px;top:258px;width:541px;height:15px;background:#4e79a7;"></div>
<div class="t" style="left: 441.5px; top: 260.42px; font-size: 12.5px; color: rgb(85, 85, 85); transform: scaleX(1.0067); transform-origin: 0px 0px;">2023</div>
<div class="a" style="left:476px;top:278px;width:423px;height:15px;background:#4e79a7;"></div>
<div class="t" style="left: 441.5px; top: 280.42px; font-size: 12.5px; color: rgb(85, 85, 85); transform: scaleX(1.0067); transform-origin: 0px 0px;">2022</div>
<div class="a" style="left:476px;top:298px;width:421px;height:15px;background:#4e79a7;"></div>
<div class="t" style="left: 441.5px; top: 300.42px; font-size: 12.5px; color: rgb(85, 85, 85); transform: scaleX(1.0067); transform-origin: 0px 0px;">2021</div>
<div class="a" style="left:476px;top:318px;width:4px;height:15px;background:#4e79a7;"></div>
<div class="t" style="left: 441.5px; top: 320.42px; font-size: 12.5px; color: rgb(85, 85, 85); transform: scaleX(1.0067); transform-origin: 0px 0px;">2025</div>
<div class="t" style="left: 475.5px; top: 345.42px; font-size: 12.5px; color: rgb(102, 102, 102); transform: scaleX(0.9152); transform-origin: 0px 0px;">0K</div>
<div class="t" style="left: 508.45px; top: 345.42px; font-size: 12.5px; color: rgb(102, 102, 102); transform: scaleX(0.9888); transform-origin: 0px 0px;">50K</div>
<div class="t" style="left: 548.9px; top: 345.42px; font-size: 12.5px; color: rgb(102, 102, 102); transform: scaleX(0.993); transform-origin: 0px 0px;">100K</div>
<div class="t" style="left: 592.85px; top: 345.42px; font-size: 12.5px; color: rgb(102, 102, 102); transform: scaleX(0.993); transform-origin: 0px 0px;">150K</div>
<div class="t" style="left: 636.8px; top: 345.42px; font-size: 12.5px; color: rgb(102, 102, 102); transform: scaleX(0.993); transform-origin: 0px 0px;">200K</div>
<div class="t" style="left: 680.75px; top: 345.42px; font-size: 12.5px; color: rgb(102, 102, 102); transform: scaleX(0.993); transform-origin: 0px 0px;">250K</div>
<div class="t" style="left: 724.7px; top: 345.42px; font-size: 12.5px; color: rgb(102, 102, 102); transform: scaleX(0.993); transform-origin: 0px 0px;">300K</div>
<div class="t" style="left: 768.65px; top: 345.42px; font-size: 12.5px; color: rgb(102, 102, 102); transform: scaleX(0.993); transform-origin: 0px 0px;">350K</div>
<div class="t" style="left: 812.6px; top: 345.42px; font-size: 12.5px; color: rgb(102, 102, 102); transform: scaleX(0.993); transform-origin: 0px 0px;">400K</div>
<div class="t" style="left: 856.55px; top: 345.42px; font-size: 12.5px; color: rgb(102, 102, 102); transform: scaleX(0.993); transform-origin: 0px 0px;">450K</div>
<div class="t" style="left: 900.5px; top: 345.42px; font-size: 12.5px; color: rgb(102, 102, 102); transform: scaleX(0.993); transform-origin: 0px 0px;">500K</div>
<div class="t" style="left: 944.45px; top: 345.42px; font-size: 12.5px; color: rgb(102, 102, 102); transform: scaleX(0.993); transform-origin: 0px 0px;">550K</div>
<div class="t" style="left: 988.4px; top: 345.42px; font-size: 12.5px; color: rgb(102, 102, 102); transform: scaleX(0.993); transform-origin: 0px 0px;">600K</div>
<div class="t" style="left: 1032.35px; top: 345.42px; font-size: 12.5px; color: rgb(102, 102, 102); transform: scaleX(0.993); transform-origin: 0px 0px;">650K</div>
<div class="t" style="left: 1076.3px; top: 345.42px; font-size: 12.5px; color: rgb(102, 102, 102); transform: scaleX(0.993); transform-origin: 0px 0px;">700K</div>
<div class="t" style="left: 1120.25px; top: 345.42px; font-size: 12.5px; color: rgb(102, 102, 102); transform: scaleX(0.993); transform-origin: 0px 0px;">750K</div>
<div class="t" style="left: 803px; top: 372.42px; font-size: 12.5px; color: rgb(58, 58, 58); font-weight: bold; transform: scaleX(0.9182); transform-origin: 0px 0px;">Sales</div>
<svg style="left:838px;top:372px;" width="11" height="10" viewBox="0 0 11 10"><path d="M0 1H10M0 5H7M0 9H3" stroke="#555" stroke-width="1.6"></path></svg>
<div class="a" style="left:1171px;top:100px;width:300px;height:650px;background:#fff;border:1px solid #d4d4d4;border-right:none;border-bottom:none;"></div>
<div class="a" style="left:1172px;top:101px;width:299px;height:28px;background:#f4f4f4;"></div>
<div class="t" style="left: 1188.5px; top: 107.57px; font-size: 13.5px; color: rgb(85, 85, 85); transform: scaleX(0.8705); transform-origin: 0px 0px;">Tableau Agent</div>
<svg style="left:1269px;top:108.5px;" width="12" height="12" viewBox="0 0 12 12"><circle cx="5.5" cy="5.9" r="5" stroke="#3a3a3a" stroke-width="1.1" fill="none"></circle><path d="M5.5 5.2V8.9" stroke="#3a3a3a" stroke-width="1.2"></path><circle cx="5.5" cy="3.4" r="0.75" fill="#3a3a3a"></circle></svg>
<svg style="left:1444px;top:109px;" width="13" height="13" viewBox="0 0 13 13"><path d="M0.6 0.4L11.6 11.6M11.6 0.4L0.6 11.6" stroke="#222" stroke-width="1.15"></path></svg>
<div class="a" style="left:1447px;top:177px;width:9px;height:176px;background:#f3f3f3;"></div>
<div class="a" style="left:1447px;top:353px;width:9px;height:287px;background:#c8c8c8;"></div>
<div class="a" style="left:1232px;top:150px;width:207px;height:58px;background:#fff;border:1px solid #cfcfcf;border-radius:3px;"></div>
<div class="t" style="left: 1243px; top: 162.57px; font-size: 13.5px; color: rgb(184, 184, 184); transform: scaleX(0.9016); transform-origin: 0px 0px;">Qual è il tasso di ritorno dei</div>
<div class="t" style="left: 1243px; top: 180.57px; font-size: 13.5px; color: rgb(184, 184, 184); transform: scaleX(0.9247); transform-origin: 0px 0px;">prodotti per ogni categoria?</div>
<div class="a" style="left:1232px;top:216px;width:207px;height:58px;background:#fff;border:1px solid #cfcfcf;border-radius:3px;"></div>
<div class="t" style="left: 1243px; top: 228.57px; font-size: 13.5px; color: rgb(184, 184, 184); transform: scaleX(0.9227); transform-origin: 0px 0px;">Come si distribuisce il profitto tra</div>
<div class="t" style="left: 1243px; top: 246.57px; font-size: 13.5px; color: rgb(184, 184, 184); transform: scaleX(0.8965); transform-origin: 0px 0px;">i diversi manager regionali?</div>
<div class="a" style="left:1232px;top:290px;width:42px;height:30px;background:#fff;border:1px solid #cfcfcf;border-radius:3px;"></div>
<svg style="left:1245px;top:295px;" width="17" height="19" viewBox="0 0 17 19"><path d="M10.5 4.2A6.3 6.3 0 1 0 14.3 8" stroke="#c4c4c4" stroke-width="1.2" fill="none"></path><path d="M9 0.5L13 3.8L9 7Z" fill="#c4c4c4"></path></svg>
<div class="t" style="left: 1232px; top: 333.57px; font-size: 13.5px; color: rgb(51, 51, 51); transform: scaleX(0.9353); transform-origin: 0px 0px;">È stato utile?</div>
<svg style="left:1318px;top:335px;" width="13" height="13" viewBox="0 0 13 13"><path d="M0.6 5.5H3V12.4H0.6Z" stroke="#555" fill="none"></path><path d="M3 5.5L6 0.8Q8 0.6 7.6 3L7 5H11Q12.5 5.2 12.2 6.8L11 11.2Q10.6 12.4 9.3 12.4H3" stroke="#555" fill="none"></path></svg>
<svg style="left:1346px;top:335px;" width="13" height="13" viewBox="0 0 13 13"><path d="M10 0.6H12.4V7.5H10Z" stroke="#555" fill="none"></path><path d="M10 7.5L7 12.2Q5 12.4 5.4 10L6 8H2Q0.5 7.8 0.8 6.2L2 1.8Q2.4 0.6 3.7 0.6H10" stroke="#555" fill="none"></path></svg>
<div class="a" style="left:1188px;top:386px;width:32px;height:32px;border-radius:50%;background:#2c5577"></div>
<div class="t" style="left: 1194px; top: 396.15px; font-size: 14px; color: rgb(255, 255, 255); transform: scaleX(0.939); transform-origin: 0px 0px;">SG</div>
<div class="t" style="left: 1232px; top: 387.57px; font-size: 13.5px; color: rgb(51, 51, 51); transform: scaleX(0.9221); transform-origin: 0px 0px;">Come variano le vendite in base al</div>
<div class="t" style="left: 1232px; top: 405.57px; font-size: 13.5px; color: rgb(51, 51, 51); transform: scaleX(0.9401); transform-origin: 0px 0px;">metodo di spedizione?</div>
<div class="a" style="left:1188px;top:446px;width:32px;height:32px;border-radius:50%;background:#d4eafc"></div>
<svg style="left:1195px;top:453px;" width="19" height="19" viewBox="0 0 19 19"><circle cx="3.2" cy="1.2" r="1.6" fill="#0b6fd4"></circle><circle cx="14.7" cy="1.2" r="1.6" fill="#0b6fd4"></circle><ellipse cx="9" cy="9.6" rx="9.2" ry="8.4" fill="#0b6fd4"></ellipse><ellipse cx="9.2" cy="11.4" rx="6.3" ry="5" fill="#d3e9fc"></ellipse><path d="M7.2 8.6Q8.8 7.6 9.2 5Q10.8 7.2 13.2 7.8Q12 8.4 11 8.6Z" fill="#0b6fd4"></path><rect x="4.6" y="10" width="3.7" height="2.3" fill="#0b6fd4"></rect><rect x="9.2" y="10" width="3.9" height="2.3" fill="#0b6fd4"></rect><path d="M8.3 10.6H9.2" stroke="#0b6fd4" stroke-width="0.8"></path></svg>
<div class="a" style="left:1232px;top:446px;width:207px;height:122px;background:#f2f2f2;border-radius:4px;"></div>
<div class="t" style="left: 1248px; top: 463.57px; font-size: 13.5px; color: rgb(51, 51, 51); transform: scaleX(0.9122); transform-origin: 0px 0px;">OK. Ho creato una</div>
<div class="t" style="left: 1248px; top: 481.57px; font-size: 13.5px; color: rgb(51, 51, 51); transform: scaleX(0.9278); transform-origin: 0px 0px;">visualizzazione a barre per</div>
<div class="t" style="left: 1248px; top: 499.57px; font-size: 13.5px; color: rgb(51, 51, 51); transform: scaleX(0.9421); transform-origin: 0px 0px;">mostrare come variano le</div>
<div class="t" style="left: 1248px; top: 517.57px; font-size: 13.5px; color: rgb(51, 51, 51); transform: scaleX(0.9338); transform-origin: 0px 0px;">vendite in base al metodo di</div>
<div class="t" style="left: 1248px; top: 535.57px; font-size: 13.5px; color: rgb(51, 51, 51); transform: scaleX(0.9222); transform-origin: 0px 0px;">spedizione.</div>
<div class="a" style="left:1232px;top:584px;width:100px;height:30px;background:#fff;border:1px solid #333;border-radius:3px;"></div>
<div class="t" style="left: 1243px; top: 591.99px; font-size: 13px; color: rgb(34, 34, 34); font-weight: bold; transform: scaleX(0.9268); transform-origin: 0px 0px;">Suggerimenti</div>
<div class="a" style="left:1341px;top:584px;width:43px;height:30px;background:#fff;border:1px solid #333;border-radius:3px;"></div>
<svg style="left:1354px;top:589px;" width="17" height="19" viewBox="0 0 17 19"><path d="M10.5 4.2A6.3 6.3 0 1 0 14.3 8" stroke="#333" stroke-width="1.3" fill="none"></path><path d="M9 0.5L13 3.8L9 7Z" fill="#333"></path></svg>
<div class="t" style="left: 1232px; top: 627.57px; font-size: 13.5px; color: rgb(51, 51, 51); transform: scaleX(0.9353); transform-origin: 0px 0px;">È stato utile?</div>
<svg style="left:1318px;top:629px;" width="13" height="13" viewBox="0 0 13 13"><path d="M0.6 5.5H3V12.4H0.6Z" stroke="#555" fill="none"></path><path d="M3 5.5L6 0.8Q8 0.6 7.6 3L7 5H11Q12.5 5.2 12.2 6.8L11 11.2Q10.6 12.4 9.3 12.4H3" stroke="#555" fill="none"></path></svg>
<svg style="left:1346px;top:629px;" width="13" height="13" viewBox="0 0 13 13"><path d="M10 0.6H12.4V7.5H10Z" stroke="#555" fill="none"></path><path d="M10 7.5L7 12.2Q5 12.4 5.4 10L6 8H2Q0.5 7.8 0.8 6.2L2 1.8Q2.4 0.6 3.7 0.6H10" stroke="#555" fill="none"></path></svg>
<div class="a" style="left:1188px;top:684px;width:268px;height:54px;background:#fff;border:1px solid #c8c8c8;"></div>
<div class="t" style="left: 1197px; top: 694.57px; font-size: 13.5px; color: rgb(102, 102, 102); transform: scaleX(0.9066); transform-origin: 0px 0px;">Descrivi la tua attività o fai una</div>
<div class="t" style="left: 1197px; top: 712.57px; font-size: 13.5px; color: rgb(102, 102, 102); transform: scaleX(0.9179); transform-origin: 0px 0px;">domanda...</div>
<div class="a" style="left:1413px;top:695px;width:30px;height:30px;background:#fff;border:1px solid #eeeeee;border-radius:3px;"></div>
<svg style="left:1421px;top:703px;" width="15" height="13" viewBox="0 0 15 13"><path d="M0.6 0.6L14 6.5L0.6 12.4L3 6.5Z" stroke="#e0e0e0" fill="none"></path><path d="M3 6.5H14" stroke="#e0e0e0"></path></svg>
<div class="a" style="left:0px;top:750px;width:1471px;height:31px;background:#e6e6e6;"></div>
<div class="a" style="left:0px;top:750px;width:1471px;height:1px;background:#d0d0d0;"></div>
<div class="a" style="left:0px;top:780px;width:1471px;height:1px;background:#d0d0d0;"></div>
<div class="a" style="left:0px;top:750px;width:1px;height:31px;background:#1a1a1a;"></div>
<div class="a" style="left:120px;top:751px;width:1px;height:28px;background:#d0d0d0;"></div>
<div class="a" style="left:174px;top:751px;width:1px;height:28px;background:#d0d0d0;"></div>
<div class="a" style="left:230px;top:751px;width:1px;height:28px;background:#d0d0d0;"></div>
<div class="a" style="left:289px;top:751px;width:1px;height:28px;background:#d0d0d0;"></div>
<div class="a" style="left:321px;top:751px;width:1px;height:28px;background:#d0d0d0;"></div>
<div class="a" style="left:354px;top:751px;width:1px;height:28px;background:#d0d0d0;"></div>
<div class="a" style="left:386px;top:751px;width:1px;height:28px;background:#d0d0d0;"></div>
<div class="a" style="left:231px;top:751px;width:58px;height:28px;background:#fcfcfc;"></div>
<svg style="left:12px;top:756px;" width="8" height="13" viewBox="0 0 8 13"><ellipse cx="4" cy="2.3" rx="3.4" ry="1.8" stroke="#666" stroke-width="1" fill="none"></ellipse><path d="M0.6 2.3V10.5A3.4 1.8 0 0 0 7.4 10.5V2.3" stroke="#666" stroke-width="1" fill="none"></path></svg>
<div class="t" style="left: 26px; top: 757.57px; font-size: 13.5px; color: rgb(102, 102, 102); transform: scaleX(0.9124); transform-origin: 0px 0px;">Origine dati</div>
<div class="t" style="left: 128px; top: 757.57px; font-size: 13.5px; color: rgb(119, 119, 119); transform: scaleX(0.8328); transform-origin: 0px 0px;">Foglio 1</div>
<div class="t" style="left: 182px; top: 757.57px; font-size: 13.5px; color: rgb(119, 119, 119); transform: scaleX(0.8744); transform-origin: 0px 0px;">Foglio 2</div>
<div class="t" style="left: 238px; top: 757.57px; font-size: 13.5px; color: rgb(34, 34, 34); font-weight: bold; transform: scaleX(0.8502); transform-origin: 0px 0px;">Foglio 3</div>
<svg style="left:299px;top:757px;" width="16" height="15" viewBox="0 0 16 15"><path d="M6.4 10.6H1.8Q0.6 10.6 0.6 9.4V1.8Q0.6 0.6 1.8 0.6H10Q11.2 0.6 11.2 1.8V5.4" stroke="#666" stroke-width="1.2" fill="none"></path><path d="M3 7.4H8.7V4.8H7.1V3.1H5.3V5.4H3Z" fill="#9a9a9a"></path><path d="M11.5 7.4V14.6M7.6 10.9H15.4" stroke="#555" stroke-width="1.8"></path></svg>
<svg style="left:331px;top:757px;" width="16" height="15" viewBox="0 0 16 15"><path d="M5.8 10.6H1.8Q0.6 10.6 0.6 9.4V1.8Q0.6 0.6 1.8 0.6H10Q11.2 0.6 11.2 1.8V5.4M0.6 5.4H11.2M5.9 0.6V10.6" stroke="#666" stroke-width="1.2" fill="none"></path><path d="M11.4 7.4V14.6M7.9 10.9H15.4" stroke="#555" stroke-width="1.8"></path></svg>
<svg style="left:362px;top:757px;" width="17" height="15" viewBox="0 0 17 15"><path d="M1.2 0.4V9.2L6.5 11.5M1.2 0.4L6.5 2.5L11.9 0.4V5.7M6.5 2.5V11.5" stroke="#666" stroke-width="1.2" fill="none" stroke-linejoin="round"></path><path d="M12.5 7.4V14.6M8.6 10.9H16.4" stroke="#555" stroke-width="1.8"></path></svg>

</body></html>
